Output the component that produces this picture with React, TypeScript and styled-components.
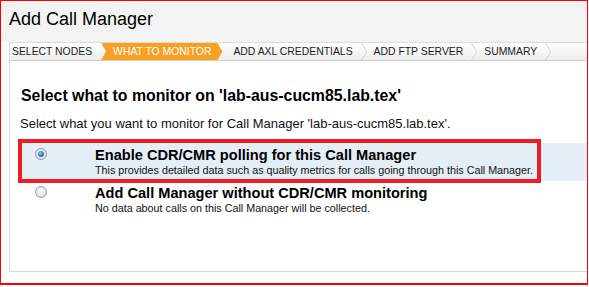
import React from "react";
import styled, { createGlobalStyle } from "styled-components";

const Global = createGlobalStyle`
  html, body { margin: 0; padding: 0; background: #fff; }
  body { font-family: "Liberation Sans", Arial, sans-serif; color: #000; }
`;

const Frame = styled.div`
  box-sizing: border-box;
  width: 588px;
  height: 285px;
  border: 1px solid #ff0000;
  border-bottom-width: 2px;
  display: flex;
  flex-direction: column;
  overflow: hidden;
`;

const Header = styled.div`
  height: 41px;
  flex: none;
  box-sizing: border-box;
  padding: 8px 0 0 8px;
  background: #f3f3f3;
`;

const Title = styled.h1`
  margin: 0;
  font-size: 18px;
  line-height: 21px;
  font-weight: normal;
  color: #000;
`;

const Body = styled.div`
  padding-left: 8px;
  flex: none;
`;

const Panel = styled.div`
  box-sizing: border-box;
  height: 230px;
  border-left: 1px solid #d8d8d8;
  border-bottom: 1px solid #d8d8d8;
  display: flex;
  flex-direction: column;
`;

const TabBar = styled.div`
  box-sizing: border-box;
  height: 19px;
  flex: none;
  display: flex;
  align-items: stretch;
  border-top: 1px solid #dcdcdc;
  border-bottom: 1px solid #d0d0d0;
  background: linear-gradient(#ffffff, #ededed);
`;

const Step = styled.div<{ $active?: boolean; $pl: number; $pr: number }>`
  display: flex;
  align-items: center;
  padding: 0 ${(p) => p.$pr}px 0 ${(p) => p.$pl}px;
  font-size: 10.4px;
  white-space: nowrap;
  color: ${(p) => (p.$active ? "#ffffff" : "#1a1a1a")};
  background: ${(p) => (p.$active ? "#f7a123" : "transparent")};
  clip-path: ${(p) =>
    p.$active
      ? "polygon(0 0, calc(100% - 5px) 0, 100% 50%, calc(100% - 5px) 100%, 0 100%, 5px 50%)"
      : "none"};
`;

const SepSvg = styled.svg`
  flex: none;
  width: 6px;
  height: 17px;
  display: block;
`;

const Sep = () => (
  <SepSvg viewBox="0 0 6 17">
    <polyline points="0.5,0 5.5,8.5 0.5,17" fill="none" stroke="#cfcfcf" strokeWidth="1" />
    <polyline points="0,1.5 4.5,8.5 0,15.5" fill="none" stroke="#ffffff" strokeWidth="1" />
  </SepSvg>
);

const Content = styled.div`
  padding: 25px 0 0 8px;
`;

const Heading = styled.h2`
  margin: 0 0 11px 3px;
  font-size: 15.85px;
  line-height: 19px;
  font-weight: bold;
  color: #000;
`;

const Intro = styled.p`
  margin: 0 0 11px 2px;
  font-size: 13px;
  line-height: 16px;
  color: #111;
`;

const Option = styled.div<{ $selected?: boolean }>`
  position: relative;
  display: flex;
  align-items: flex-start;
  padding: 4px 0 4px 17px;
  height: 38px;
  box-sizing: border-box;
  background: ${(p) => (p.$selected ? "#e4eef7" : "transparent")};
`;

const Radio = styled.span<{ $checked?: boolean }>`
  flex: none;
  box-sizing: border-box;
  width: 12px;
  height: 12px;
  margin-top: 1px;
  border-radius: 50%;
  border: 1px solid #9a9a9a;
  background: radial-gradient(circle at 50% 40%, #ffffff 0%, #e6e6e6 60%, #cfcfcf 100%);
  display: flex;
  align-items: center;
  justify-content: center;
  &::after {
    content: "";
    display: ${(p) => (p.$checked ? "block" : "none")};
    width: 6px;
    height: 6px;
    border-radius: 50%;
    background: radial-gradient(circle at 40% 35%, #7fd0f5 0%, #1e7fc0 55%, #0a4a80 100%);
  }
`;

const OptionText = styled.div`
  margin-left: 48px;
  display: flex;
  flex-direction: column;
`;

const OptionTitle = styled.div`
  font-size: 14.6px;
  line-height: 17px;
  font-weight: bold;
  color: #000;
`;

const OptionSub = styled.div`
  font-size: 10.75px;
  line-height: 13px;
  color: #111;
`;

const Highlight = styled.div`
  position: absolute;
  left: 0;
  top: -4px;
  width: 523px;
  height: 44px;
  box-sizing: border-box;
  border: 4px solid #ec1c24;
  pointer-events: none;
`;

export default function App() {
  return (
    <>
      <Global />
      <Frame>
        <Header>
          <Title>Add Call Manager</Title>
        </Header>
        <Body>
          <Panel>
            <TabBar>
              <Step $pl={2} $pr={9}>SELECT NODES</Step>
              <Step $active $pl={12} $pr={11}>WHAT TO MONITOR</Step>
              <Step $pl={11} $pr={8}>ADD AXL CREDENTIALS</Step>
              <Sep />
              <Step $pl={7} $pr={8}>ADD FTP SERVER</Step>
              <Sep />
              <Step $pl={7} $pr={8}>SUMMARY</Step>
              <Sep />
            </TabBar>
            <Content>
              <Heading>Select what to monitor on 'lab-aus-cucm85.lab.tex'</Heading>
              <Intro>Select what you want to monitor for Call Manager 'lab-aus-cucm85.lab.tex'.</Intro>
              <Option $selected>
                <Radio $checked />
                <OptionText>
                  <OptionTitle>Enable CDR/CMR polling for this Call Manager</OptionTitle>
                  <OptionSub>
                    This provides detailed data such as quality metrics for calls going through this Call Manager.
                  </OptionSub>
                </OptionText>
                <Highlight />
              </Option>
              <Option>
                <Radio />
                <OptionText>
                  <OptionTitle>Add Call Manager without CDR/CMR monitoring</OptionTitle>
                  <OptionSub>No data about calls on this Call Manager will be collected.</OptionSub>
                </OptionText>
              </Option>
            </Content>
          </Panel>
        </Body>
      </Frame>
    </>
  );
}
